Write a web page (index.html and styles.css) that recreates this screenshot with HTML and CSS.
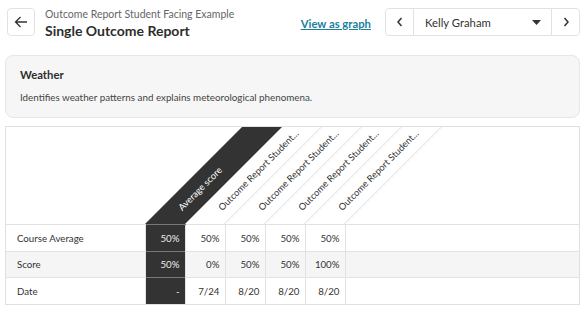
FILE: index.html
```html
<!DOCTYPE html>
<html lang="en">
<head>
    <meta charset="UTF-8">
    <meta name="viewport" content="width=device-width, initial-scale=1.0">
    <title>Single Outcome Report</title>
    <link rel="stylesheet" href="styles.css">
</head>
<body>
    <header class="top-bar">
        <button class="back-button" aria-label="Back">
            <svg width="14" height="14" viewBox="0 0 14 14"><path d="M13 7H1.5M6.5 2L1.5 7l5 5" fill="none" stroke="#333" stroke-width="1.3"/></svg>
        </button>
        <div class="titles">
            <div class="eyebrow">Outcome Report Student Facing Example</div>
            <h1>Single Outcome Report</h1>
        </div>
        <a class="graph-link" href="#">View as graph</a>
        <div class="student-picker">
            <button class="picker-nav" aria-label="Previous student">
                <svg width="8" height="10" viewBox="0 0 8 10"><path d="M5.5 1L2 5l3.5 4" fill="none" stroke="#333" stroke-width="1.5"/></svg>
            </button>
            <div class="picker-name">
                <span>Kelly Graham</span>
                <svg width="9" height="5" viewBox="0 0 9 5"><path d="M0 0h9L4.5 5z" fill="#333"/></svg>
            </div>
            <button class="picker-nav" aria-label="Next student">
                <svg width="8" height="10" viewBox="0 0 8 10"><path d="M2.5 1L6 5 2.5 9" fill="none" stroke="#333" stroke-width="1.5"/></svg>
            </button>
        </div>
    </header>

    <section class="outcome-card">
        <h2>Weather</h2>
        <p>Identifies weather patterns and explains meteorological phenomena.</p>
    </section>

    <div class="report">
        <table>
            <thead>
                <tr>
                    <th class="label-col"></th>
                    <th class="col avg"><span class="slant"></span><span class="col-name">Average score</span></th>
                    <th class="col"><span class="slant"></span><span class="col-name">Outcome Report Student...</span></th>
                    <th class="col"><span class="slant"></span><span class="col-name">Outcome Report Student...</span></th>
                    <th class="col"><span class="slant"></span><span class="col-name">Outcome Report Student...</span></th>
                    <th class="col"><span class="slant"></span><span class="col-name">Outcome Report Student...</span></th>
                    <th class="rest"></th>
                </tr>
            </thead>
            <tbody>
                <tr>
                    <td class="label">Course Average</td>
                    <td class="num avg">50%</td>
                    <td class="num">50%</td>
                    <td class="num">50%</td>
                    <td class="num">50%</td>
                    <td class="num">50%</td>
                    <td class="rest"></td>
                </tr>
                <tr class="shaded">
                    <td class="label">Score</td>
                    <td class="num avg">50%</td>
                    <td class="num">0%</td>
                    <td class="num">50%</td>
                    <td class="num">50%</td>
                    <td class="num">100%</td>
                    <td class="rest"></td>
                </tr>
                <tr>
                    <td class="label">Date</td>
                    <td class="num avg">-</td>
                    <td class="num">7/24</td>
                    <td class="num">8/20</td>
                    <td class="num">8/20</td>
                    <td class="num">8/20</td>
                    <td class="rest"></td>
                </tr>
            </tbody>
        </table>
    </div>
</body>
</html>
```

FILE: styles.css
```css
body {
    font-family: Lato, 'Noto Sans', sans-serif;
    margin: 0;
    padding: 0 5px;
    color: #333;
    background-color: #fff;
}

/* Top bar */
.top-bar {
    display: flex;
    align-items: center;
    padding: 8px 0 0 2px;
    height: 28px;
}

.back-button {
    width: 28px;
    height: 28px;
    display: flex;
    align-items: center;
    justify-content: center;
    background: #fff;
    border: 1px solid #e2e2e2;
    border-radius: 4px;
    padding: 0;
}

.titles {
    flex: 1;
    margin-left: 10px;
    padding-top: 3px;
}

.eyebrow {
    font-size: 10.5px;
    color: #666;
    line-height: 13px;
}

.titles h1 {
    font-size: 14px;
    font-weight: 700;
    margin: 1px 0 0;
    line-height: 17px;
    color: #2d2d2d;
}

.graph-link {
    font-size: 11.3px;
    font-weight: 700;
    color: #1a7f9c;
    text-decoration: underline;
    margin-right: 14px;
    margin-top: 2px;
}

.student-picker {
    display: flex;
    width: 195px;
    height: 28px;
    border: 1px solid #e2e2e2;
    border-radius: 4px;
    box-sizing: border-box;
}

.picker-nav {
    width: 27px;
    display: flex;
    align-items: center;
    justify-content: center;
    background: #fff;
    border: none;
    padding: 0;
    border-radius: 4px;
}

.picker-name {
    flex: 1;
    display: flex;
    align-items: center;
    justify-content: space-between;
    padding: 0 10px 0 11px;
    border-left: 1px solid #e2e2e2;
    border-right: 1px solid #e2e2e2;
    font-size: 11.3px;
    color: #333;
}

/* Outcome card */
.outcome-card {
    margin-top: 19px;
    height: 63px;
    box-sizing: border-box;
    background-color: #f6f6f6;
    border: 1px solid #e6e6e6;
    border-radius: 8px;
    padding: 12px 14px;
}

.outcome-card h2 {
    font-size: 11.3px;
    font-weight: 700;
    margin: 0;
    line-height: 14px;
    color: #2d2d2d;
}

.outcome-card p {
    font-size: 9.8px;
    margin: 9px 0 0;
    line-height: 13px;
    color: #444;
}

/* Report table */
.report {
    margin-top: 8px;
    border: 1px solid #e0e0e0;
    overflow: hidden;
}

table {
    width: 100%;
    border-collapse: collapse;
    font-size: 9.7px;
}

thead th {
    height: 97px;
    padding: 0;
    position: relative;
    vertical-align: bottom;
}

.label-col {
    width: 139px;
}

th.col {
    width: 40px;
}

.slant {
    position: absolute;
    left: 0;
    bottom: 0;
    width: 40px;
    height: 97px;
    box-sizing: border-box;
    transform-origin: left bottom;
    transform: skewX(-45deg);
    border-right: 1px solid #dcdcdc;
}

.avg .slant {
    background-color: #333;
    border-right: none;
}

.col-name {
    position: absolute;
    left: 40px;
    bottom: 0;
    height: 28px;
    line-height: 28px;
    padding-left: 7px;
    transform-origin: left bottom;
    transform: rotate(-45deg);
    font-size: 9.3px;
    font-weight: 400;
    color: #333;
    text-align: left;
    white-space: nowrap;
}

.avg .col-name {
    color: #fff;
}

tbody tr {
    height: 26.5px;
    border-top: 1px solid #e2e2e2;
}

tbody tr.shaded {
    background-color: #f5f5f5;
}

td {
    padding: 0;
}

td.label {
    padding-left: 11px;
}

td.num {
    text-align: right;
    padding-right: 5px;
    border-left: 1px solid #e2e2e2;
}

td.num.avg {
    background-color: #333;
    color: #eee;
    border-top: 1px solid #777;
}

td.rest {
    border-left: 1px solid #e2e2e2;
}
```
